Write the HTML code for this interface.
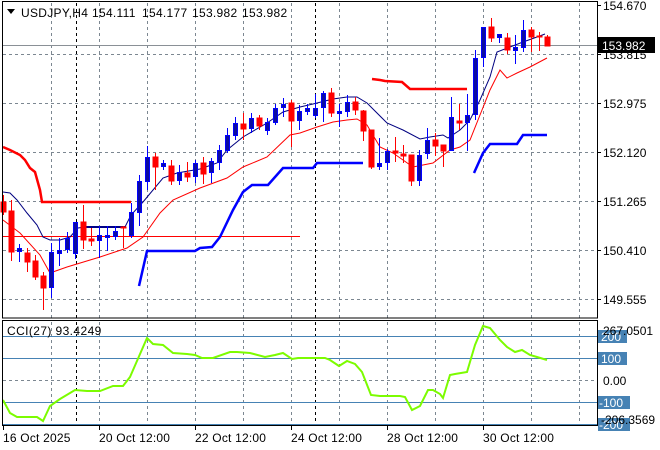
<!DOCTYPE html>
<html><head><meta charset="utf-8"><style>
html,body{margin:0;padding:0;background:#fff;}
svg{display:block;font-family:"Liberation Sans",sans-serif;}
</style></head><body>
<svg width="660" height="450" viewBox="0 0 660 450" xmlns="http://www.w3.org/2000/svg">
<rect width="660" height="450" fill="#fff"/>
<g stroke="#7c8791" stroke-width="1" stroke-dasharray="3,3" fill="none">
<path d="M51.5 3V318M99.5 3V318M147.5 3V318M195.5 3V318M243.5 3V318M291.5 3V318M339.5 3V318M387.5 3V318M435.5 3V318M483.5 3V318M531.5 3V318M579.5 3V318"/>
<path d="M51.5 322V425M99.5 322V425M147.5 322V425M195.5 322V425M243.5 322V425M291.5 322V425M339.5 322V425M387.5 322V425M435.5 322V425M483.5 322V425M531.5 322V425M579.5 322V425"/>
<path d="M3 54.5H597M3 103.5H597M3 152.5H597M3 201.5H597M3 250.5H597M3 299.5H597M3 380.5H597"/>
</g>
<g stroke="#000" stroke-dasharray="3,3"><path d="M76.5 3V318M315.5 3V318M76.5 322V425M315.5 322V425"/></g>
<line x1="3" y1="45.5" x2="597" y2="45.5" stroke="#8a9096"/>
<polyline fill="none" stroke="#f00" stroke-width="1" points="3,236.5 300,236.5"/>
<polyline fill="none" stroke="#f00" stroke-width="2.5" points="3,147 10,150 20,155 25,160 30,168 35,172 40,190 42,202 131,202"/>
<polyline fill="none" stroke="#f00" stroke-width="2.5" points="372,79 380,80 385,81 402,82 410,89 467,89"/>
<polyline fill="none" stroke="#00f" stroke-width="2.5" points="139,286 147,251 195,251 200,248 212,247 220,237 233,210 243,192 252,185 268,185 283,168 313,168 317,163 363,163"/>
<polyline fill="none" stroke="#00f" stroke-width="2.5" points="474,173 483,153 490,144 517,144 523,135 547,135"/>
<polyline fill="none" stroke="#000090" stroke-width="2" points="85,227 125,227"/>
<polyline fill="none" stroke="#000080" stroke-width="1" points="3,192 10,193 17,200 27,213 37,225 43,237 50,240 60,240 70,237 78,228 85,227 125,227 131,215 143,202 163,178 177,173 200,169 217,163 227,150 243,137 267,123 283,112 300,107 313,104 333,99 347,97 357,97 367,103 387,123 403,130 420,139 430,137 443,135 448,138 460,130 470,120 480,100 490,77 497,52 510,47 523,42 537,37 545,34"/>
<polyline fill="none" stroke="#f00" stroke-width="1" points="3,220 20,233 40,255 50,273 67,267 100,257 127,248 143,237 160,213 173,200 200,188 227,178 243,167 267,157 290,135 300,133 317,127 333,122 347,120 357,119 367,125 380,147 393,153 413,167 433,163 450,150 460,147 470,140 478,120 490,90 500,70 507,78 517,73 530,67 547,58"/>
<g stroke-width="1">
<g stroke="#f00" fill="#f00">
<line x1="3.5" y1="195" x2="3.5" y2="215"/><rect x="1" y="202" width="5" height="10"/>
<line x1="11.5" y1="200" x2="11.5" y2="261"/><rect x="9" y="211" width="5" height="41"/>
<line x1="27.5" y1="248" x2="27.5" y2="272"/><rect x="25" y="253" width="5" height="9"/>
<line x1="35.5" y1="255" x2="35.5" y2="280"/><rect x="33" y="261" width="5" height="16"/>
<line x1="43.5" y1="272" x2="43.5" y2="310"/><rect x="41" y="276" width="5" height="12"/>
<line x1="83.5" y1="205" x2="83.5" y2="249"/><rect x="81" y="222" width="5" height="18"/>
<line x1="91.5" y1="228" x2="91.5" y2="246"/><rect x="89" y="239" width="5" height="2"/>
<line x1="123.5" y1="226" x2="123.5" y2="248"/><rect x="121" y="227" width="5" height="1"/>
<line x1="155.5" y1="153" x2="155.5" y2="190"/><rect x="153" y="157" width="5" height="10"/>
<line x1="171.5" y1="160" x2="171.5" y2="185"/><rect x="169" y="166" width="5" height="15"/>
<line x1="187.5" y1="162" x2="187.5" y2="182"/><rect x="185" y="173" width="5" height="4"/>
<line x1="203.5" y1="157" x2="203.5" y2="184"/><rect x="201" y="163" width="5" height="11"/>
<line x1="243.5" y1="113" x2="243.5" y2="140"/><rect x="241" y="124" width="5" height="5"/>
<line x1="259.5" y1="115" x2="259.5" y2="130"/><rect x="257" y="118" width="5" height="8"/>
<line x1="291.5" y1="100" x2="291.5" y2="147"/><rect x="289" y="103" width="5" height="18"/>
<line x1="331.5" y1="88" x2="331.5" y2="117"/><rect x="329" y="93" width="5" height="20"/>
<line x1="355.5" y1="97" x2="355.5" y2="115"/><rect x="353" y="102" width="5" height="8"/>
<line x1="363.5" y1="110" x2="363.5" y2="141"/><rect x="361" y="111" width="5" height="20"/>
<line x1="371.5" y1="130" x2="371.5" y2="169"/><rect x="369" y="130" width="5" height="37"/>
<line x1="395.5" y1="137" x2="395.5" y2="162"/><rect x="393" y="151" width="5" height="2"/>
<line x1="403.5" y1="145" x2="403.5" y2="163"/><rect x="401" y="154" width="5" height="2"/>
<line x1="411.5" y1="155" x2="411.5" y2="186"/><rect x="409" y="155" width="5" height="26"/>
<line x1="435.5" y1="133" x2="435.5" y2="156"/><rect x="433" y="140" width="5" height="6"/>
<line x1="443.5" y1="145" x2="443.5" y2="167"/><rect x="441" y="145" width="5" height="6"/>
<line x1="459.5" y1="104" x2="459.5" y2="130"/><rect x="457" y="121" width="5" height="2"/>
<line x1="491.5" y1="18" x2="491.5" y2="42"/><rect x="489" y="27" width="5" height="11"/>
<line x1="507.5" y1="33" x2="507.5" y2="54"/><rect x="505" y="38" width="5" height="12"/>
<line x1="531.5" y1="27" x2="531.5" y2="52"/><rect x="529" y="30" width="5" height="7"/>
<line x1="539.5" y1="32" x2="539.5" y2="51"/><rect x="537" y="36" width="5" height="1"/>
<line x1="547.5" y1="35" x2="547.5" y2="46"/><rect x="545" y="37" width="5" height="9"/>
</g>
<g stroke="#0000ff" fill="#0c0ca0">
<line x1="19.5" y1="244" x2="19.5" y2="262"/><rect x="17.5" y="248.5" width="4" height="3"/>
<line x1="51.5" y1="243" x2="51.5" y2="298"/><rect x="49.5" y="252.5" width="4" height="35"/>
<line x1="59.5" y1="238" x2="59.5" y2="266"/><rect x="57.5" y="250.5" width="4" height="3"/>
<line x1="67.5" y1="232" x2="67.5" y2="253"/><rect x="65.5" y="238.5" width="4" height="11"/>
<line x1="75.5" y1="222" x2="75.5" y2="259"/><rect x="73.5" y="222.5" width="4" height="31"/>
<line x1="99.5" y1="226" x2="99.5" y2="258"/><rect x="97.5" y="235.5" width="4" height="5"/>
<line x1="107.5" y1="226" x2="107.5" y2="251"/><rect x="105.5" y="235.5" width="4" height="2"/>
<line x1="115.5" y1="226" x2="115.5" y2="240"/><rect x="113.5" y="231.5" width="4" height="5"/>
<line x1="131.5" y1="203" x2="131.5" y2="238"/><rect x="129.5" y="212.5" width="4" height="23"/>
<line x1="139.5" y1="175" x2="139.5" y2="226"/><rect x="137.5" y="181.5" width="4" height="31"/>
<line x1="147.5" y1="146" x2="147.5" y2="190"/><rect x="145.5" y="157.5" width="4" height="24"/>
<line x1="163.5" y1="160" x2="163.5" y2="170"/><rect x="161.5" y="163.5" width="4" height="3"/>
<line x1="179.5" y1="165" x2="179.5" y2="185"/><rect x="177.5" y="172.5" width="4" height="8"/>
<line x1="195.5" y1="160" x2="195.5" y2="183"/><rect x="193.5" y="163.5" width="4" height="13"/>
<line x1="211.5" y1="158" x2="211.5" y2="183"/><rect x="209.5" y="161.5" width="4" height="11"/>
<line x1="219.5" y1="145" x2="219.5" y2="170"/><rect x="217.5" y="150.5" width="4" height="12"/>
<line x1="227.5" y1="128" x2="227.5" y2="153"/><rect x="225.5" y="135.5" width="4" height="15"/>
<line x1="235.5" y1="117" x2="235.5" y2="140"/><rect x="233.5" y="123.5" width="4" height="12"/>
<line x1="251.5" y1="113" x2="251.5" y2="133"/><rect x="249.5" y="118.5" width="4" height="10"/>
<line x1="267.5" y1="118" x2="267.5" y2="135"/><rect x="265.5" y="122.5" width="4" height="8"/>
<line x1="275.5" y1="104" x2="275.5" y2="125"/><rect x="273.5" y="108.5" width="4" height="14"/>
<line x1="283.5" y1="98" x2="283.5" y2="117"/><rect x="281.5" y="104.5" width="4" height="3"/>
<line x1="299.5" y1="105" x2="299.5" y2="130"/><rect x="297.5" y="111.5" width="4" height="9"/>
<line x1="307.5" y1="104" x2="307.5" y2="115"/><rect x="305.5" y="108.5" width="4" height="3"/>
<line x1="315.5" y1="94" x2="315.5" y2="118"/><rect x="313.5" y="108.5" width="4" height="7"/>
<line x1="323.5" y1="91" x2="323.5" y2="122"/><rect x="321.5" y="93.5" width="4" height="14"/>
<line x1="339.5" y1="104" x2="339.5" y2="127"/><rect x="337.5" y="111.5" width="4" height="2"/>
<line x1="347.5" y1="95" x2="347.5" y2="117"/><rect x="345.5" y="102.5" width="4" height="9"/>
<line x1="379.5" y1="138" x2="379.5" y2="170"/><rect x="377.5" y="163.5" width="4" height="3"/>
<line x1="387.5" y1="149" x2="387.5" y2="170"/><rect x="385.5" y="151.5" width="4" height="11"/>
<line x1="419.5" y1="150" x2="419.5" y2="186"/><rect x="417.5" y="155.5" width="4" height="25"/>
<line x1="427.5" y1="128" x2="427.5" y2="159"/><rect x="425.5" y="140.5" width="4" height="13"/>
<line x1="451.5" y1="97" x2="451.5" y2="151"/><rect x="449.5" y="117.5" width="4" height="33"/>
<line x1="467.5" y1="94" x2="467.5" y2="151"/><rect x="465.5" y="115.5" width="4" height="7"/>
<line x1="475.5" y1="50" x2="475.5" y2="120"/><rect x="473.5" y="58.5" width="4" height="56"/>
<line x1="483.5" y1="27" x2="483.5" y2="67"/><rect x="481.5" y="27.5" width="4" height="30"/>
<line x1="499.5" y1="34" x2="499.5" y2="43"/><rect x="497.5" y="34.5" width="4" height="3"/>
<line x1="515.5" y1="35" x2="515.5" y2="64"/><rect x="513.5" y="47.5" width="4" height="3"/>
<line x1="523.5" y1="20" x2="523.5" y2="52"/><rect x="521.5" y="30.5" width="4" height="17"/>
</g>
</g>
<g stroke="#4682b4"><path d="M3 336.5H597M3 358.5H597M3 402.5H597M3 424.5H597"/></g>
<polyline fill="none" stroke="#7cfc00" stroke-width="2" points="3,400 10,413 17,417 37,417 43,421 50,406 60,399 75,390 87,391 100,391 113,386 123,386 130,377 147,338 153,344 163,345 173,353 187,354 195,355 202,358 213,358 230,352 237,352 250,353 265,357 275,355 283,353 292,359 298,358 325,358 330,360 339,366 347,361 355,364 362,372 371,395 380,396 400,396 405,397 412,410 420,406 428,390 433,390 440,394 443,398 450,375 455,374 467,372 475,345 483,326 490,328 500,340 507,347 515,352 522,350 530,355 537,357 547,360"/>
<g fill="none" stroke="#000" stroke-width="1">
<rect x="2.5" y="1.5" width="595" height="316.5"/>
<rect x="2.5" y="320.5" width="595" height="105"/>
</g>
<g stroke="#000"><path d="M597 5.5H601M597 54.5H601M597 103.5H601M597 152.5H601M597 201.5H601M597 250.5H601M597 299.5H601M3.5 426V430M99.5 426V430M195.5 426V430M291.5 426V430M387.5 426V430M483.5 426V430"/></g>
<path d="M7 9H15L11 14Z" fill="#000"/>
<g font-size="12" fill="#000">
<text x="21" y="17" letter-spacing="0.3">USDJPY,H4</text>
<text x="92" y="17" letter-spacing="0.3">154.111</text>
<text x="142" y="17" letter-spacing="0.3">154.177</text>
<text x="192" y="17" letter-spacing="0.3">153.982</text>
<text x="242" y="17" letter-spacing="0.3">153.982</text>
<text x="7" y="335" letter-spacing="0.4">CCI(27) 93.4249</text>
</g>
<g font-size="12" fill="#000">
<text x="603" y="10">154.670</text>
<text x="603" y="59">153.815</text>
<text x="603" y="108">152.975</text>
<text x="603" y="157">152.120</text>
<text x="603" y="206">151.265</text>
<text x="603" y="255">150.410</text>
<text x="603" y="304">149.555</text>
</g>
<rect x="598" y="37" width="57" height="16" fill="#000"/>
<text x="602" y="50" font-size="12" fill="#fff">153.982</text>
<g fill="#4682b4"><rect x="598" y="330" width="29" height="13"/><rect x="598" y="352" width="29" height="13"/><rect x="598" y="396" width="32" height="13"/><rect x="598" y="418" width="32" height="13"/></g>
<g font-size="12">
<text x="601" y="341" fill="#fff">200</text>
<text x="601" y="363" fill="#fff">100</text>
<text x="599" y="407" fill="#fff">-100</text>
<text x="599" y="429" fill="#fff">-200</text>
<text x="603" y="335" fill="#000">267.0501</text>
<text x="603" y="385" fill="#000">0.00</text>
<text x="601" y="424" fill="#000">-206.3569</text>
</g>
<g font-size="12" fill="#000" letter-spacing="0.2">
<text x="3" y="442">16 Oct 2025</text>
<text x="99" y="442">20 Oct 12:00</text>
<text x="195" y="442">22 Oct 12:00</text>
<text x="291" y="442">24 Oct 12:00</text>
<text x="387" y="442">28 Oct 12:00</text>
<text x="483" y="442">30 Oct 12:00</text>
</g>
</svg>
</body></html>
